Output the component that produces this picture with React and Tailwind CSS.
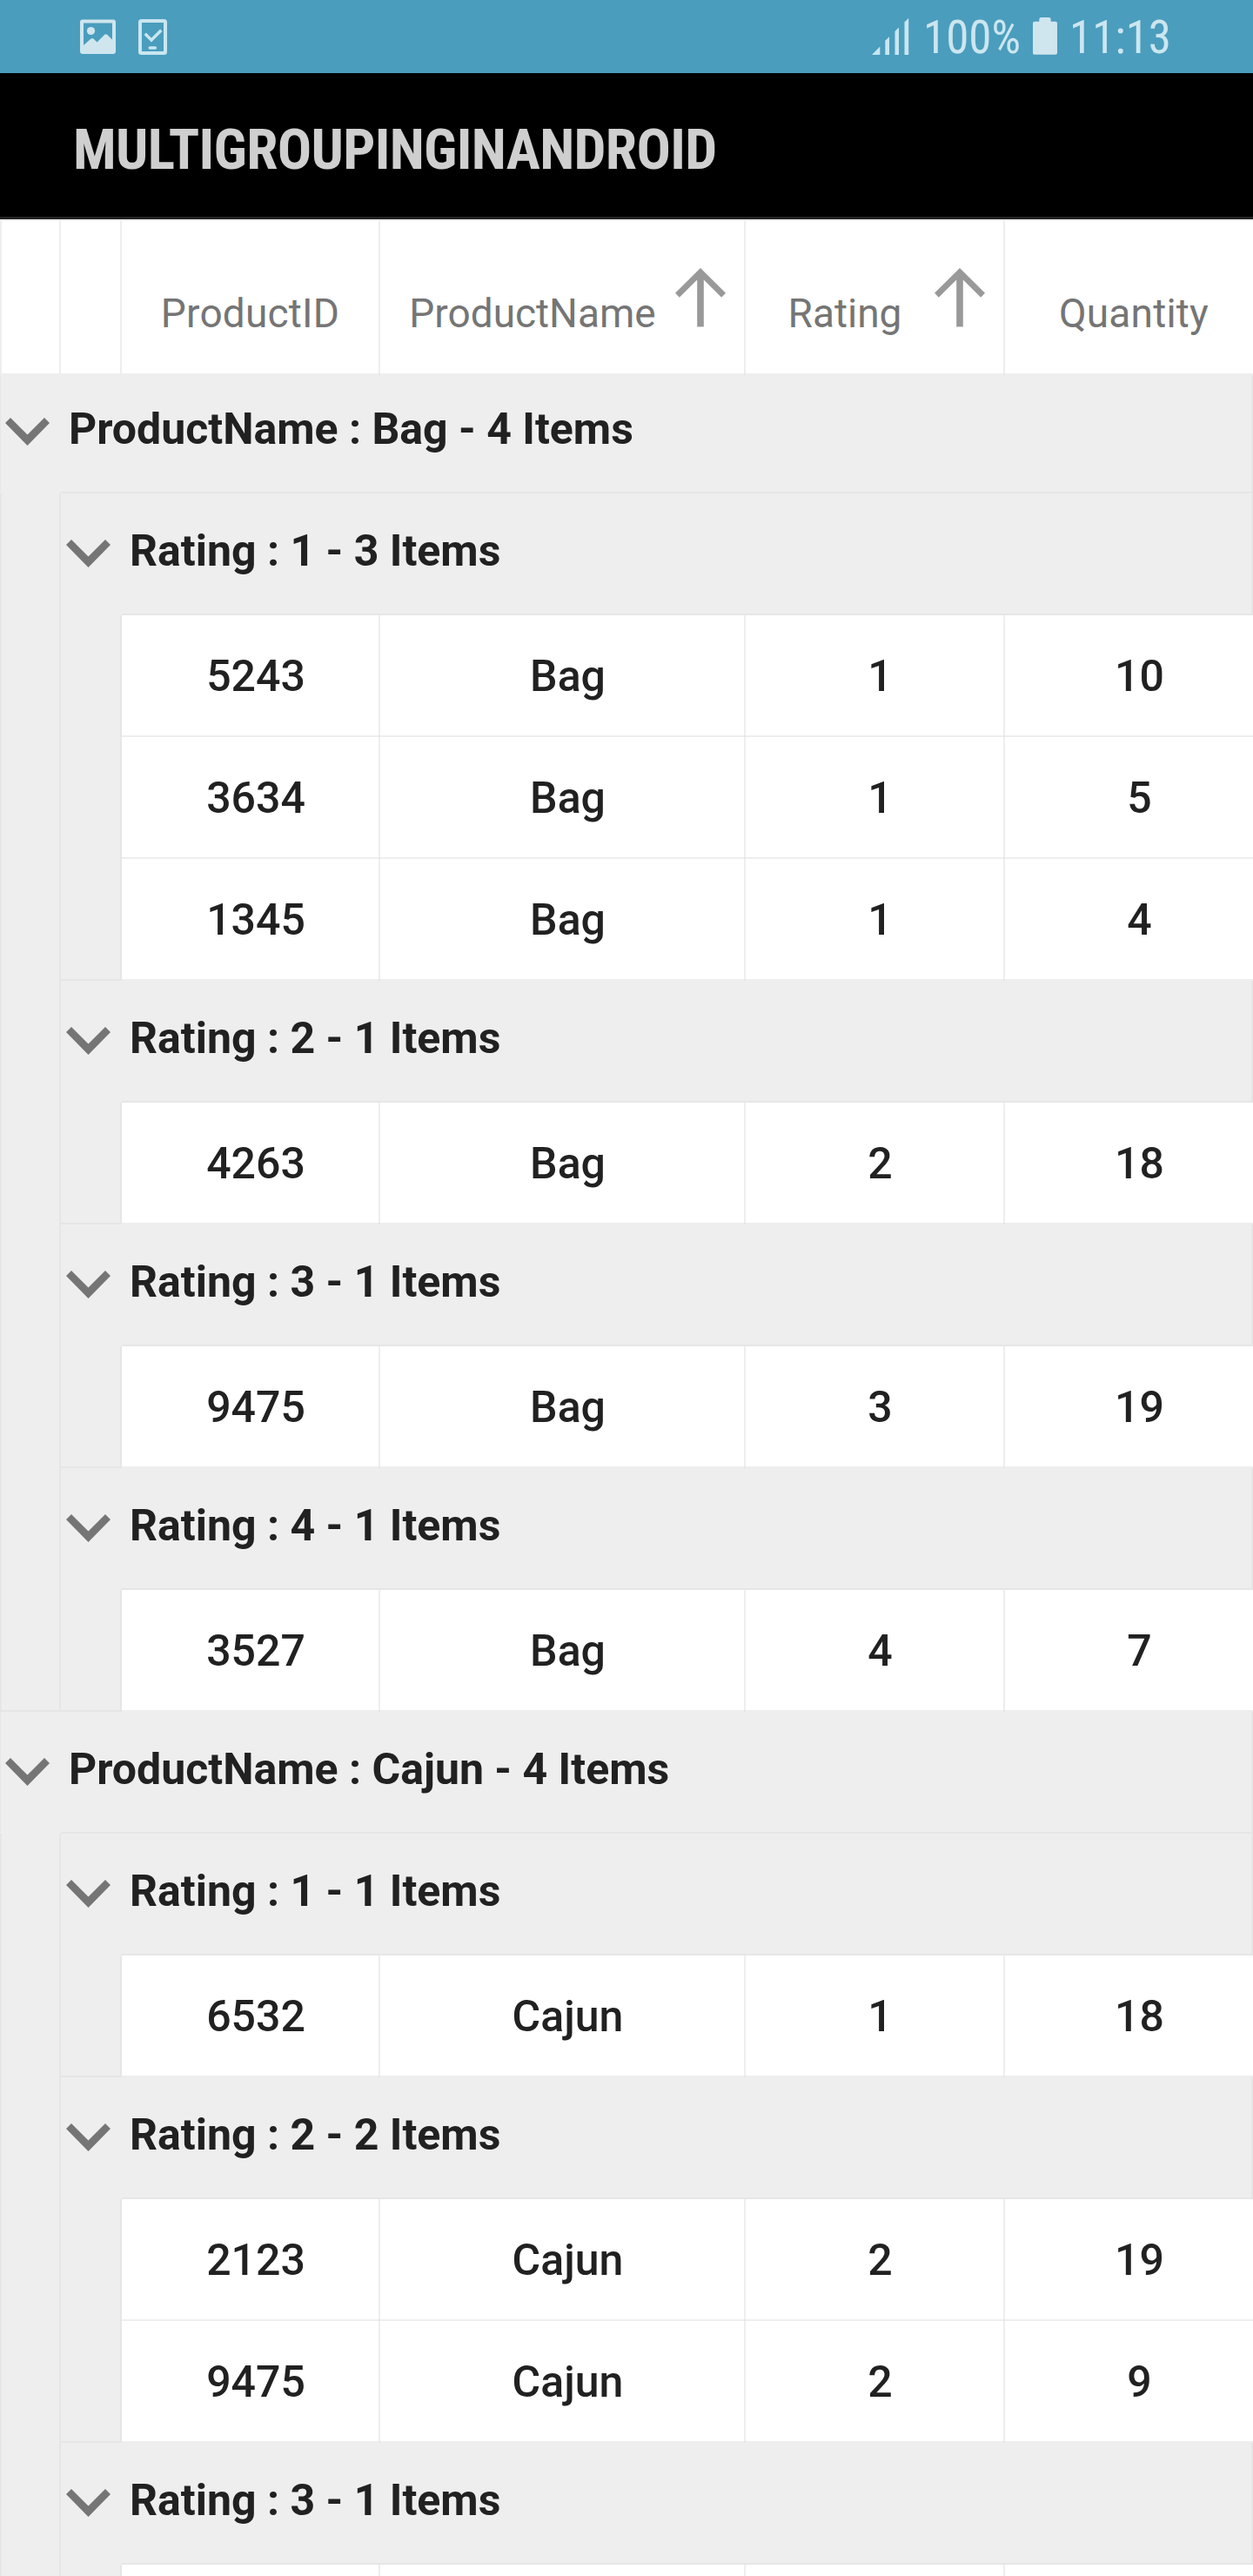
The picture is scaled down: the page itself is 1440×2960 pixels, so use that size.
const groups = [
  {
    title: "ProductName : Bag - 4 Items",
    ratings: [
      { title: "Rating : 1 - 3 Items", rows: [["5243", "Bag", "1", "10"], ["3634", "Bag", "1", "5"], ["1345", "Bag", "1", "4"]] },
      { title: "Rating : 2 - 1 Items", rows: [["4263", "Bag", "2", "18"]] },
      { title: "Rating : 3 - 1 Items", rows: [["9475", "Bag", "3", "19"]] },
      { title: "Rating : 4 - 1 Items", rows: [["3527", "Bag", "4", "7"]] },
    ],
  },
  {
    title: "ProductName : Cajun - 4 Items",
    ratings: [
      { title: "Rating : 1 - 1 Items", rows: [["6532", "Cajun", "1", "18"]] },
      { title: "Rating : 2 - 2 Items", rows: [["2123", "Cajun", "2", "19"], ["9475", "Cajun", "2", "9"]] },
      { title: "Rating : 3 - 1 Items", rows: [["", "", "", ""]] },
    ],
  },
];

const columnWidths = ["w-[297px]", "w-[420px]", "w-[298px]", "w-[298px]"];

function StatusBar() {
  return (
    <div className="flex h-[84px] shrink-0 items-start bg-[#4a9dbd] pl-[92px] text-[53px] leading-[53px] text-[#cce6ef] [font-stretch:condensed]">
      <svg className="mt-[22px] h-[40px] w-[41px] shrink-0" viewBox="0 0 41 40" fill="#cfe6ee">
        <path
          fillRule="evenodd"
          d="M3 0.5H38Q41 0.5 41 3.5V37Q41 40 38 40H3Q0 40 0 37V3.500Q0 0.500 3 0.500ZM4 4.500V30L12.500 22.500Q14 21.500 15.500 22.500L19.500 26.500L28 18Q29.700 16.500 31.400 18L37 23.500V4.500Z"
        />
        <circle cx="12.500" cy="13.500" r="4.600" />
      </svg>
      <svg className="mt-[22px] ml-[26px] h-[41px] w-[33px] shrink-0" viewBox="0 0 33 41" fill="none" stroke="#c9e6f0">
        <rect x="2" y="2" width="29" height="37" rx="1.500" strokeWidth="4" />
        <path d="M7.700 16.800L15 24L26.300 12.700" strokeWidth="3.400" />
        <path d="M13.300 33H19.300" strokeWidth="3.600" strokeLinecap="round" />
      </svg>
      <svg className="mt-[20px] ml-[810px] h-[43px] w-[43px] shrink-0" viewBox="0 0 43 43" fill="#c9e6f0">
        <path d="M0 43L9.300 33.500V43Z" />
        <path d="M15.300 43V26.800L20 22.300V43Z" />
        <path d="M26.500 43V16L31 11.500V43Z" />
        <path d="M37.500 43V5.500L42.200 0.800V43Z" />
      </svg>
      <span className="mt-[17px] ml-[16px] w-[112px] shrink-0">100%</span>
      <svg className="mt-[20px] ml-[14px] h-[43px] w-[28px] shrink-0" viewBox="0 0 28 43" fill="#cfe6ee">
        <path d="M9.500 0H18.500Q20.700 0 20.700 2.200V4.800H26Q28 4.800 28 6.800V40.800Q28 42.800 26 42.800H2Q0 42.800 0 40.800V6.800Q0 4.800 2 4.800H7.300V2.200Q7.300 0 9.500 0Z" />
      </svg>
      <span className="mt-[17px] ml-[14px] shrink-0">11:13</span>
    </div>
  );
}

function SortArrow() {
  return (
    <svg className="-mt-[29px] mr-[21px] -ml-[11px] h-[68px] w-[58px] shrink-0" viewBox="0 0 58 68" fill="#999999">
      <polygon points="29,0 0,28.800 4.800,33.800 25.200,13.600 25.200,67.500 32.800,67.500 32.800,13.600 53.200,33.800 58,28.800" />
    </svg>
  );
}

function Chevron() {
  return (
    <svg className="mt-[53px] ml-[5.7px] h-[32px] w-[51px] shrink-0" viewBox="0 0 51 32" fill="#757575">
      <polygon points="6,0 25.500,19.600 45,0 51,6 25.500,32 0,6" />
    </svg>
  );
}

function ColumnLine() {
  return (
    <div className="flex w-[2px] shrink-0 flex-col bg-[#eeeeee]">
      <div className="mt-auto h-[2px] bg-[#e6e6e6]" />
    </div>
  );
}

function HeaderCell({ width, label, sorted }) {
  return (
    <div className={`${width} flex shrink-0`}>
      <div className="flex flex-1 border-y-2 border-[#eeeeee] bg-white pt-[83px]">
        <span className={`flex-1 text-center ${sorted ? "" : "tracking-[0.2px]"}`}>{label}</span>
        {sorted && <SortArrow />}
      </div>
      <ColumnLine />
    </div>
  );
}

function GridHeader() {
  return (
    <div className="relative z-10 flex h-[179px] shrink-0 text-[46px] leading-[46px] text-[#757575]">
      <div className="w-[70px] shrink-0 border-2 border-[#eeeeee] bg-white" />
      <div className="w-[70px] shrink-0 border-y-2 border-r-2 border-[#eeeeee] bg-white" />
      <HeaderCell width={columnWidths[0]} label="ProductID" />
      <HeaderCell width={columnWidths[1]} label="ProductName" sorted />
      <HeaderCell width={columnWidths[2]} label="Rating" sorted />
      <HeaderCell width={columnWidths[3]} label="Quantity" />
    </div>
  );
}

function GroupRow({ title, nested }) {
  return (
    <div className="flex h-[140px] shrink-0 text-[50px] leading-[50px] font-bold">
      {nested && <div className="w-[70px] shrink-0 border-x-2 border-[#e6e6e6]" />}
      <div className={`flex w-[70px] shrink-0 ${nested ? "border-b-0" : "shadow-[inset_1px_0_0_#e6e6e6]"}`}>
        <Chevron />
      </div>
      <div className="flex-1 border-r-2 border-b-2 border-[#e6e6e6] pt-[41px] pl-[9px] whitespace-pre">{title}</div>
    </div>
  );
}

function ProductRow({ title }) {
  return (
    <div className="flex h-[140px] shrink-0 flex-col text-[50px] leading-[50px] font-bold">
      <div className="flex h-[138px] border-r-2 border-[#e6e6e6] shadow-[inset_1px_0_0_#e6e6e6]">
        <div className="flex w-[70px] shrink-0">
          <Chevron />
        </div>
        <div className="flex-1 pt-[41px] pl-[9px] whitespace-pre">{title}</div>
      </div>
      <div className="ml-[70px] h-[2px] bg-[#e6e6e6]" />
    </div>
  );
}

function DataRow({ values, last, lastOfProduct }) {
  return (
    <div className="flex h-[140px] shrink-0 text-[50px] leading-[50px] font-medium">
      <div className={`w-[70px] shrink-0 border-x-2 border-[#e6e6e6] ${lastOfProduct ? "border-b-2" : ""}`} />
      <div className={`w-[70px] shrink-0 border-r-2 border-[#e6e6e6] ${last ? "border-b-2" : ""}`} />
      {values.map((value, i) => (
        <div key={i} className={`${columnWidths[i]} flex shrink-0`}>
          <div className="flex-1 border-b-2 border-[#eeeeee] bg-white pt-[45px] pl-[13px] text-center">{value}</div>
          <ColumnLine />
        </div>
      ))}
    </div>
  );
}

export default function App() {
  return (
    <div className="flex h-[2960px] w-[1440px] flex-col overflow-hidden bg-[#eeeeee] font-['Roboto',sans-serif] text-[#212121]">
      <StatusBar />
      <div className="h-[168px] shrink-0 border-b-[3px] border-[#222222] bg-black pt-[55px] pl-[84px] text-[65.5px] leading-[66px] font-bold tracking-[-0.7px] text-[#cfcfcf] [font-stretch:condensed]">
        MULTIGROUPINGINANDROID
      </div>
      <GridHeader />
      <div className="-mt-1 flex flex-col">
        {groups.map((group) => (
          <div key={group.title} className="flex flex-col">
            <ProductRow title={group.title} />
            {group.ratings.map((rating, r) => (
              <div key={rating.title} className="flex flex-col">
                <GroupRow title={rating.title} nested />
                {rating.rows.map((values, i) => {
                  const last = i === rating.rows.length - 1;
                  return (
                    <DataRow
                      key={i}
                      values={values}
                      last={last}
                      lastOfProduct={last && r === group.ratings.length - 1}
                    />
                  );
                })}
              </div>
            ))}
          </div>
        ))}
      </div>
    </div>
  );
}
